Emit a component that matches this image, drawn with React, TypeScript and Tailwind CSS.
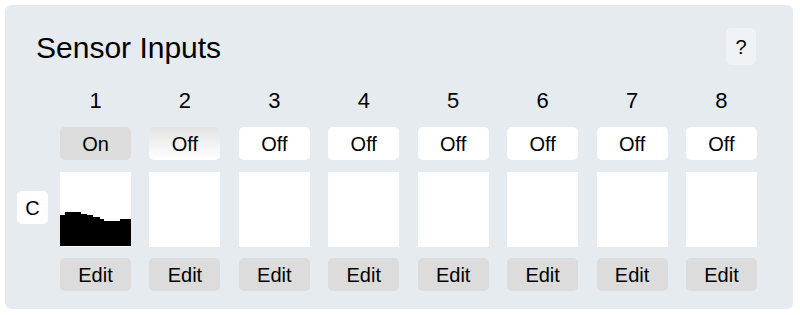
import React from 'react';

const CHANNELS = [1, 2, 3, 4, 5, 6, 7, 8];

function ToggleButton({ index }: { index: number }) {
  if (index === 1) {
    return (
      <button className="h-[33px] w-full rounded-[5px] bg-[#dcdcdc] text-[20px] leading-none text-black">
        On
      </button>
    );
  }
  if (index === 2) {
    return (
      <button className="h-[33px] w-full rounded-[5px] bg-gradient-to-b from-[#e4e4e4] to-white text-[20px] leading-none text-black">
        Off
      </button>
    );
  }
  return (
    <button className="h-[33px] w-full rounded-[5px] bg-white text-[20px] leading-none text-black">
      Off
    </button>
  );
}

function SensorChart() {
  return (
    <svg width="71" height="75" viewBox="0 0 71 75" className="block">
      <path
        d="M0 74 V43 H5 V40 H21 V42 H27 V43 H33 V45 H40 V47 H44 V49 H60 V47 H71 V74 Z"
        fill="#000"
      />
    </svg>
  );
}

export default function App() {
  return (
    <div className="p-[5px] font-['Liberation_Sans',Arial,sans-serif] text-black">
      <div className="w-[788px] h-[304px] rounded-[6px] bg-[#e6ebf0] pl-[12px] pt-[23px]">
        {/* Header */}
        <div className="flex items-start justify-between pl-[19px] pr-[37px]">
          <h2 className="mt-[3px] text-[30px] leading-[34px] font-normal">Sensor Inputs</h2>
          <button className="h-[37px] w-[30px] rounded-[5px] bg-[#eff3f6] text-[20px] leading-none">?</button>
        </div>

        <div className="mt-[23px] flex">
          {/* Row label column */}
          <div className="w-[43px] flex flex-col">
            <div className="h-[26px]" />
            <div className="mt-[13px] h-[33px]" />
            <div className="mt-[12px] h-[75px] flex items-center">
              <div className="h-[33px] w-[31px] -mt-[4px] rounded-[5px] bg-white flex items-center justify-center text-[20px] leading-none">
                C
              </div>
            </div>
          </div>

          {/* Channels */}
          <div className="grid grid-cols-[repeat(8,71px)] gap-x-[18.43px]">
            {CHANNELS.map((n) => (
              <div key={n} className="flex flex-col items-stretch">
                <div className="h-[26px] text-center text-[22px] leading-[26px]">{n}</div>
                <div className="mt-[13px]">
                  <ToggleButton index={n} />
                </div>
                <div className="mt-[12px] h-[75px] bg-white">
                  {n === 1 && <SensorChart />}
                </div>
                <button className="mt-[11px] h-[33px] w-full rounded-[5px] bg-[#dcdcdc] text-[20px] leading-none">
                  Edit
                </button>
              </div>
            ))}
          </div>
        </div>
      </div>
    </div>
  );
}
